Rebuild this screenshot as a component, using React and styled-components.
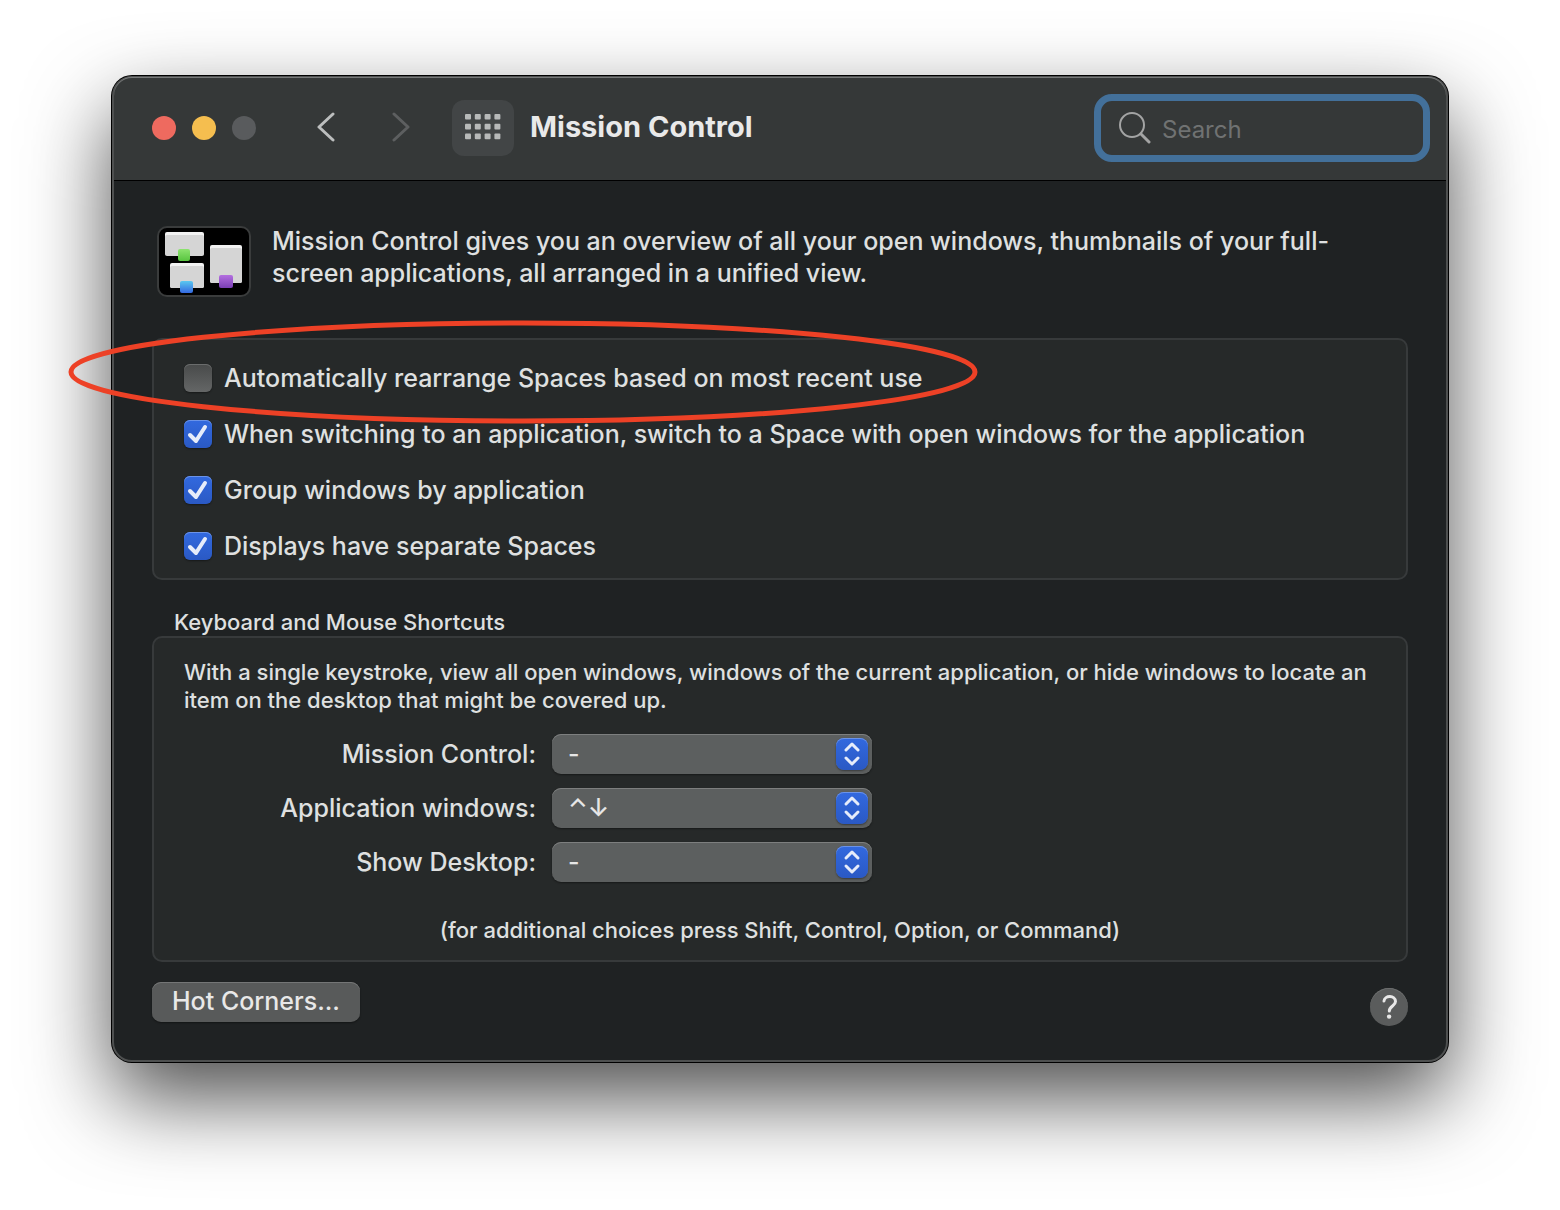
import React, { Component } from "react";
import styled, { createGlobalStyle } from "styled-components";

const shortcuts = [
  { id: "mission", label: "Mission Control:", value: "-" },
  { id: "appWindows", label: "Application windows:", value: "⌃↓" },
  { id: "desktop", label: "Show Desktop:", value: "-" }
];

const options = [
  {
    name: "rearrange",
    label: "Automatically rearrange Spaces based on most recent use"
  },
  {
    name: "switchSpace",
    label:
      "When switching to an application, switch to a Space with open windows for the application"
  },
  { name: "group", label: "Group windows by application" },
  { name: "separate", label: "Displays have separate Spaces" }
];

export default class App extends Component {
  state = {
    rearrange: false,
    switchSpace: true,
    group: true,
    separate: true,
    search: ""
  };

  toggle = e => {
    this.setState({ [e.target.name]: e.target.checked });
  };

  render() {
    return (
      <Page>
        <GlobalStyle />
        <Window>
          <TitleBar>
            <Lights>
              <Light type="button" aria-label="Close" $color="#ee6a5f" />
              <Light type="button" aria-label="Minimize" $color="#f5be4f" />
              <Light type="button" aria-label="Zoom" $color="#595b5d" />
            </Lights>
            <NavButtons>
              <NavButton type="button" aria-label="Back">
                <svg width="20" height="30" viewBox="0 0 20 30">
                  <path d="M17 2 L3 15 L17 28" />
                </svg>
              </NavButton>
              <NavButton type="button" aria-label="Forward" disabled>
                <svg width="20" height="30" viewBox="0 0 20 30">
                  <path d="M3 2 L17 15 L3 28" />
                </svg>
              </NavButton>
            </NavButtons>
            <GridButton type="button" aria-label="Show All">
              <GridIcon />
            </GridButton>
            <Title>Mission Control</Title>
            <SearchBox>
              <svg width="32" height="32" viewBox="0 0 32 32" fill="none">
                <circle cx="13" cy="13" r="12" stroke="#a3a4a4" strokeWidth="2" />
                <path
                  d="M22 22 L30 30"
                  stroke="#a3a4a4"
                  strokeWidth="3"
                  strokeLinecap="round"
                />
              </svg>
              <input
                type="text"
                aria-label="Search"
                placeholder="Search"
                value={this.state.search}
                onChange={e => this.setState({ search: e.target.value })}
              />
            </SearchBox>
          </TitleBar>

          <Content>
            <Intro>
              <MissionIcon />
              <p>
                Mission Control gives you an overview of all your open windows,
                thumbnails of your full-screen applications, all arranged in a
                unified view.
              </p>
            </Intro>

            <OptionsPanel>
              {options.map(item => (
                <Option key={item.name}>
                  <CheckWrap>
                    <input
                      type="checkbox"
                      name={item.name}
                      checked={this.state[item.name]}
                      onChange={this.toggle}
                    />
                    <svg width="28" height="28" viewBox="0 0 28 28">
                      <path d="M6 15 L12 21 L21 7" />
                    </svg>
                  </CheckWrap>
                  {item.label}
                </Option>
              ))}
              <Highlight viewBox="0 0 910 104" fill="none">
                <ellipse cx="455" cy="52" rx="452" ry="49" />
              </Highlight>
            </OptionsPanel>

            <GroupTitle>Keyboard and Mouse Shortcuts</GroupTitle>
            <ShortcutsPanel>
              <p>
                With a single keystroke, view all open windows, windows of the
                current application, or hide windows to locate an item on the
                desktop that might be covered up.
              </p>
              <Fields>
                {shortcuts.map(item => (
                  <Field key={item.id}>
                    <label htmlFor={item.id}>{item.label}</label>
                    <SelectWrap>
                      <select id={item.id} defaultValue={item.value}>
                        <option>{item.value}</option>
                      </select>
                      <Stepper>
                        <svg width="32" height="32" viewBox="0 0 32 32">
                          <path d="M10 12 L16 6 L22 12 M10 20 L16 26 L22 20" />
                        </svg>
                      </Stepper>
                    </SelectWrap>
                  </Field>
                ))}
              </Fields>
              <Note>
                (for additional choices press Shift, Control, Option, or
                Command)
              </Note>
            </ShortcutsPanel>

            <Footer>
              <CornersButton type="button">Hot Corners...</CornersButton>
              <HelpButton type="button" aria-label="Help">
                <svg width="38" height="38" viewBox="0 0 38 38" fill="none">
                  <path
                    d="M14 13 C14.5 7 25.5 7 25.5 13.5 C25.5 18 19.3 18 19.3 23"
                    stroke="#e8e8e8"
                    strokeWidth="3"
                    strokeLinecap="round"
                  />
                  <circle cx="19.1" cy="28.6" r="2.2" fill="#e8e8e8" />
                </svg>
              </HelpButton>
            </Footer>
          </Content>
        </Window>
      </Page>
    );
  }
}

function GridIcon() {
  const cells = [];
  for (let row = 0; row < 3; row++) {
    for (let col = 0; col < 4; col++) {
      cells.push(
        <rect
          key={row + "-" + col}
          x={col * 9.8}
          y={row * 9.8}
          width="6"
          height="5.6"
          rx="1"
        />
      );
    }
  }
  return (
    <svg width="36" height="26" viewBox="0 0 36 26" fill="#b7b9b9">
      {cells}
    </svg>
  );
}

function MissionIcon() {
  return (
    <svg width="94" height="72" viewBox="0 0 94 72">
      <defs>
        <linearGradient id="green" x1="0" y1="0" x2="0" y2="1">
          <stop offset="0" stopColor="#8de36f" />
          <stop offset="1" stopColor="#58c43f" />
        </linearGradient>
        <linearGradient id="blue" x1="0" y1="0" x2="0" y2="1">
          <stop offset="0" stopColor="#5ac8f0" />
          <stop offset="1" stopColor="#3468e0" />
        </linearGradient>
        <linearGradient id="purple" x1="0" y1="0" x2="0" y2="1">
          <stop offset="0" stopColor="#b46fe0" />
          <stop offset="1" stopColor="#7a3fb5" />
        </linearGradient>
      </defs>
      <rect x="1" y="2" width="92" height="69" rx="9" fill="#000" stroke="#3a3c3c" strokeWidth="2" />
      <rect x="8" y="7" width="39" height="23" rx="2" fill="#f2f2f2" />
      <rect x="8" y="10" width="39" height="21" rx="2" fill="#d5d5d5" />
      <rect x="53" y="20" width="32" height="38" rx="2" fill="#f2f2f2" />
      <rect x="53" y="23" width="32" height="35" rx="2" fill="#d5d5d5" />
      <rect x="13" y="38" width="34" height="25" rx="2" fill="#f2f2f2" />
      <rect x="13" y="41" width="34" height="22" rx="2" fill="#d5d5d5" />
      <rect x="21" y="24" width="12" height="12" rx="2" fill="url(#green)" />
      <rect x="23" y="56" width="13" height="12" rx="2" fill="url(#blue)" />
      <rect x="62" y="50" width="14" height="13" rx="2" fill="url(#purple)" />
    </svg>
  );
}

const GlobalStyle = createGlobalStyle`
  * {
    box-sizing: border-box;
  }
  body {
    margin: 0;
    background: #fff;
    color: #dfe0e0;
    font-family: Inter, "Liberation Sans", sans-serif;
    font-size: 25px;
    font-weight: 500;
  }
  p, h1, h2 {
    margin: 0;
  }
  button, input, select {
    font: inherit;
    color: inherit;
  }
  button {
    border: 0;
    padding: 0;
  }
  svg {
    display: block;
    flex: none;
  }
`;

const Page = styled.main`
  padding: 76px 112px 148px;
  overflow: hidden;
`;

const Window = styled.div`
  border: 2px solid #4e5050;
  border-radius: 20px;
  background: #1f2223;
  box-shadow: 0 0 0 1px #000, 0 36px 84px rgba(0, 0, 0, 0.7);
`;

const TitleBar = styled.header`
  display: flex;
  align-items: center;
  height: 103px;
  padding: 0 16px 2px 38px;
  background: #353838;
  border-bottom: 1px solid #000;
  border-radius: 18px 18px 0 0;
  box-shadow: 0 -1px 0 #777979;
`;

const Lights = styled.div`
  display: flex;
  gap: 16px;
`;

const Light = styled.button`
  width: 24px;
  height: 24px;
  border-radius: 50%;
  background: ${props => props.$color};
`;

const NavButtons = styled.div`
  display: flex;
  gap: 55px;
  margin: 0 41px 2px 60px;
`;

const NavButton = styled.button`
  background: none;
  path {
    fill: none;
    stroke: #bcbebe;
    stroke-width: 3;
    stroke-linecap: round;
    stroke-linejoin: round;
  }
  &:disabled path {
    stroke: #5d5f60;
  }
`;

const GridButton = styled.button`
  display: flex;
  align-items: center;
  justify-content: center;
  width: 62px;
  height: 56px;
  padding-bottom: 2px;
  border-radius: 12px;
  background: #424546;
`;

const Title = styled.h1`
  flex: 1;
  padding: 0 0 4px 16px;
  font-size: 29px;
  font-weight: 700;
  color: #e9e9e9;
`;

const SearchBox = styled.div`
  display: flex;
  align-items: center;
  gap: 11px;
  width: 336px;
  height: 68px;
  padding: 0 18px;
  border: 7px solid #43709a;
  border-radius: 18px;
  font-size: 24px;
  font-weight: 400;
  input {
    flex: 1;
    min-width: 0;
    padding: 2px 0 0;
    border: 0;
    outline: 0;
    background: none;
  }
  input::placeholder {
    color: #707272;
    opacity: 1;
  }
`;

const Content = styled.div`
  padding: 44px 38px 34px;
`;

const Intro = styled.div`
  display: flex;
  gap: 21px;
  padding-left: 5px;
  p {
    line-height: 32px;
  }
`;

const Panel = styled.section`
  border: 2px solid #373a3b;
  border-radius: 10px;
  background: #262929;
`;

const OptionsPanel = styled(Panel)`
  position: relative;
  display: flex;
  flex-direction: column;
  align-items: flex-start;
  gap: 28px;
  margin-top: 41px;
  padding: 24px 30px 18px;
`;

const Option = styled.label`
  display: flex;
  align-items: center;
  gap: 12px;
  line-height: 28px;
`;

const CheckWrap = styled.span`
  display: grid;
  input,
  svg {
    grid-area: 1 / 1;
  }
  input {
    appearance: none;
    width: 28px;
    height: 28px;
    margin: 0;
    border-radius: 6px;
    background: linear-gradient(#484a4a, #646666);
    box-shadow: inset 0 1px 0 #6a6c6c, 0 1px 2px rgba(0, 0, 0, 0.4);
  }
  input:checked {
    background: linear-gradient(#3269df, #2a59c4);
    box-shadow: inset 0 1px 0 #6b93e8, 0 1px 2px rgba(0, 0, 0, 0.4);
  }
  svg {
    visibility: hidden;
    pointer-events: none;
  }
  input:checked + svg {
    visibility: visible;
  }
  path {
    fill: none;
    stroke: #e6ecfa;
    stroke-width: 4;
    stroke-linecap: round;
    stroke-linejoin: round;
  }
`;

// hand drawn ring round the first option, runs past the window edge
const Highlight = styled.svg`
  position: absolute;
  top: -20px;
  left: -86px;
  width: 910px;
  height: 104px;
  pointer-events: none;
  ellipse {
    stroke: #ed4126;
    stroke-width: 5;
  }
`;

const GroupTitle = styled.h2`
  margin: 28px 22px 0;
  font-size: 22px;
  font-weight: 500;
  line-height: 28px;
`;

const ShortcutsPanel = styled(Panel)`
  padding: 20px 30px 16px;
  font-size: 22px;
  line-height: 28px;
`;

const Fields = styled.div`
  display: flex;
  flex-direction: column;
  gap: 14px;
  margin-top: 20px;
  font-size: 25px;
`;

const Field = styled.div`
  display: grid;
  grid-template-columns: 352px 320px;
  column-gap: 16px;
  align-items: center;
  label {
    text-align: right;
  }
`;

const SelectWrap = styled.div`
  position: relative;
  select {
    display: block;
    appearance: none;
    width: 100%;
    height: 40px;
    padding: 0 40px 0 16px;
    border: 0;
    border-radius: 9px;
    background: #5c5f5f;
    box-shadow: inset 0 1px 0 #7d7f7f, 0 1px 2px rgba(0, 0, 0, 0.4);
    color: #e6e6e6;
  }
`;

const Stepper = styled.span`
  position: absolute;
  top: 4px;
  right: 4px;
  border-radius: 8px;
  background: linear-gradient(#3269df, #2a59c4);
  box-shadow: inset 0 1px 0 #6b93e8, 0 1px 2px rgba(0, 0, 0, 0.4);
  pointer-events: none;
  path {
    fill: none;
    stroke: #e6ecfa;
    stroke-width: 3;
    stroke-linecap: round;
    stroke-linejoin: round;
  }
`;

const Note = styled.div`
  margin-top: 34px;
  text-align: center;
`;

const Footer = styled.footer`
  display: flex;
  align-items: flex-end;
  justify-content: space-between;
  margin-top: 20px;
`;

const CornersButton = styled.button`
  align-self: flex-start;
  height: 40px;
  padding: 0 20px 2px;
  border-radius: 9px;
  background: #585a5a;
  box-shadow: inset 0 1px 0 #747676, 0 1px 2px rgba(0, 0, 0, 0.4);
  color: #e8e8e8;
`;

const HelpButton = styled.button`
  width: 38px;
  height: 38px;
  margin-top: 6px;
  border-radius: 50%;
  background: #5a5c5c;
  box-shadow: inset 0 1px 0 #6c6e6e;
`;
